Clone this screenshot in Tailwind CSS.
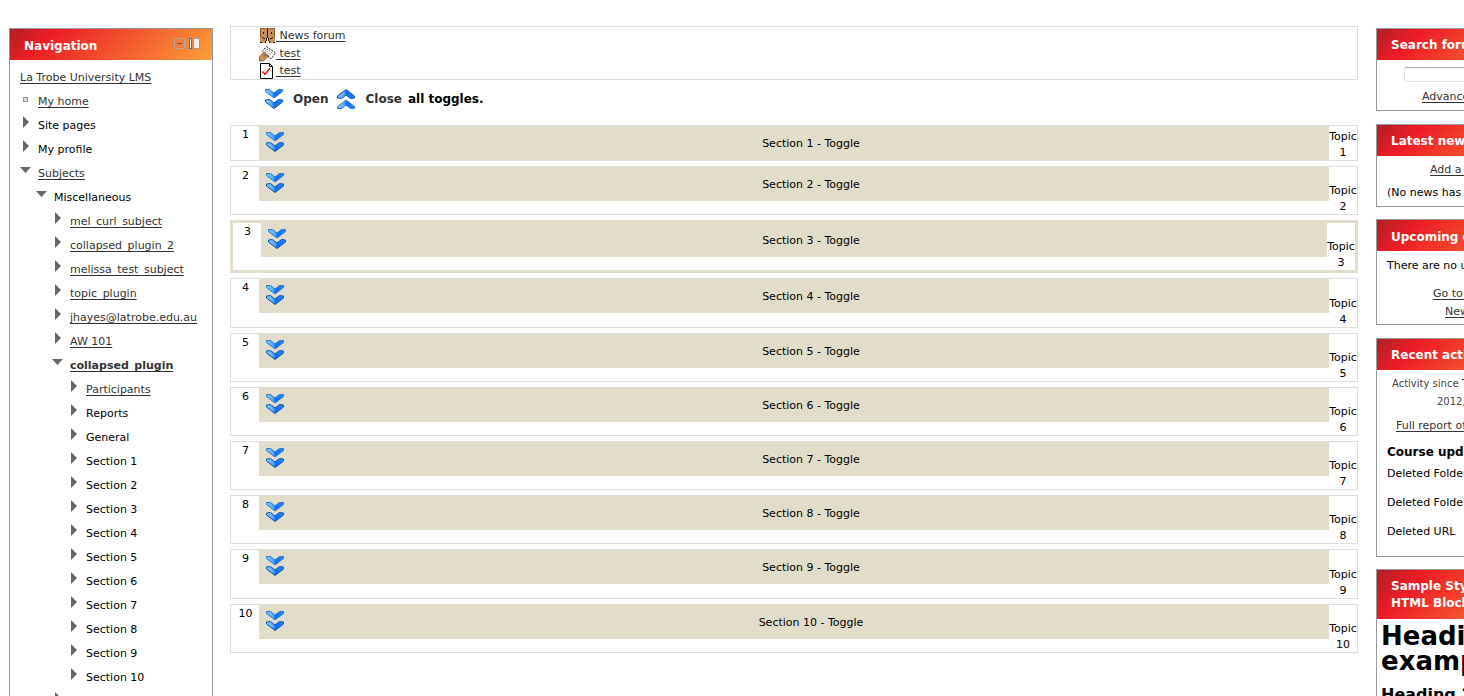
<!DOCTYPE html>
<html lang="en">
<head>
  <meta charset="UTF-8" />
  <meta name="viewport" content="width=device-width, initial-scale=1" />
  <title>Course: collapsed_plugin</title>
  <script src="https://cdn.jsdelivr.net/npm/@tailwindcss/browser@4"></script>
</head>
<body class="bg-white text-black font-['Verdana','DejaVu_Sans',sans-serif] text-[11px] leading-4 h-screen overflow-hidden">
  <!-- shared icons -->
  <svg class="absolute w-0 h-0">
    <defs>
      <linearGradient id="blue" x1="0" y1="0" x2="1" y2="0">
        <stop offset="0" stop-color="#7cc4ff" />
        <stop offset="0.35" stop-color="#5fb0fc" />
        <stop offset="0.55" stop-color="#0a6cf5" />
        <stop offset="1" stop-color="#2b8cff" />
      </linearGradient>
    </defs>
    <symbol id="down" viewBox="0 0 20 22">
      <path d="M1.500 1.500h4l4.500 3.500 4.500-3.500h4v2L10 10 1.500 3.500z" fill="url(#blue)" stroke="#2a78d0" stroke-linejoin="round" />
      <path d="M1.500 12l4-.500 4.500 3.500 4.500-3.500 4 .500v2L10 20.500 1.500 14z" fill="url(#blue)" stroke="#0f4fb4" stroke-linejoin="round" />
    </symbol>
    <symbol id="up" viewBox="0 0 20 22">
      <path d="M1.500 10l4 .500 4.500-3.500 4.500 3.500 4-.500V8L10 1.500 1.500 8z" fill="url(#blue)" stroke="#0f4fb4" stroke-linejoin="round" />
      <path d="M1.500 20.500h4l4.500-3.500 4.500 3.500h4v-2L10 12l-8.500 6.500z" fill="url(#blue)" stroke="#2a78d0" stroke-linejoin="round" />
    </symbol>
  </svg>

  <div class="flex items-start w-[calc(100%+125px)] px-[9px] pt-[26px]">
    <!-- Navigation -->
    <aside class="w-[204px] shrink-0 mt-0.5 mr-[17px] border border-[#999]">
      <header class="flex items-center h-[31px] pl-3.5 pr-3 pt-0.5 bg-[linear-gradient(135deg,#b01f24_0%,#ee1c25_20%,#f9a13a_100%)]">
        <h2 class="flex-1 text-[12px] font-bold text-white">Navigation</h2>
        <button aria-label="Hide Navigation block" class="mb-1">
          <svg width="11" height="11" viewBox="0 0 11 11"><rect x=".5" y=".5" width="10" height="10" rx="1" fill="#f47c3a" stroke="#b5a79c" /><path d="M3 5.500h5" stroke="#6b5a50" /></svg>
        </button>
        <button aria-label="Dock Navigation block" class="ml-1 mb-1">
          <svg width="11" height="11" viewBox="0 0 11 11"><rect x=".5" y=".5" width="2" height="10" fill="#fff" stroke="#1a7fd4" /><path d="M4.500.5h6v10h-6z" fill="#eee" stroke="#999" /></svg>
        </button>
      </header>
      <ul id="tree" class="pl-2.5 pt-[5px] whitespace-nowrap"></ul>
    </aside>

    <!-- Course content -->
    <main class="flex-1 min-w-0">
      <ul class="border border-[#ddd] h-[54px] pl-7">
        <li class="h-[18px]">
          <a href="#" class="flex text-[#333]">
            <svg width="17" height="17" viewBox="0 0 17 17" shape-rendering="crispEdges">
              <path d="M1 1h7v10l-1 2v3H1zM9 1h7v15h-6v-3l-1-2z" fill="#c68e5c" />
              <path d="M1 1h5v1H2v8H1zM11 1h5v9h-1V2h-4z" fill="#8a5a30" />
              <path d="M8 1h1v10H8zM7 11h1v3H7zM9 11h1v3H9zM6 14h1v2H6zM10 14h1v2h-1zM4 5h1v2H4zM12 5h1v2h-1zM3 10h1v1H3zM4 11h2v1H4zM11 11h2v1h-2zM13 10h1v1h-1zM1 15h2v1H1zM14 15h2v1h-2z" fill="#2c1708" />
            </svg>
            <span class="pt-px underline underline-offset-2 whitespace-pre"> News forum</span>
          </a>
        </li>
        <li class="h-[17px]">
          <a href="#" class="flex text-[#333]">
            <svg width="17" height="17" viewBox="0 0 17 17">
              <path d="M7.500 1.500l9 6.500-4.500 6-9-7.500z" fill="#fff" stroke="#222" stroke-dasharray="2 1" />
              <path d="M8 4l6 4.500M6.500 5.500l6 4.500M5.500 7.500l5 4" stroke="#777" stroke-dasharray="1.500 1" />
              <path d="M.5 16v-4l2.500-3 2.500-2 1.500 1-2 3 4-1 .5 1.500-4 3-1 1.500z" fill="#c68e5c" stroke="#7a4c26" stroke-width=".7" />
            </svg>
            <span class="pt-px underline underline-offset-2 whitespace-pre"> test</span>
          </a>
        </li>
        <li class="h-[17px]">
          <a href="#" class="flex text-[#333]">
            <svg width="17" height="17" viewBox="0 0 17 17">
              <path d="M1.500 1.500h9l3 3v12h-12z" fill="#fff" stroke="#000" />
              <path d="M10.500 1.500v3h3" fill="none" stroke="#000" />
              <path d="M3.500 9.500l2.500 3 5-6.500" fill="none" stroke="#f00" stroke-width="1.400" />
            </svg>
            <span class="pt-px underline underline-offset-2 whitespace-pre"> test</span>
          </a>
        </li>
      </ul>

      <div class="flex items-center h-[37px] pl-[34px] mb-2 text-[12px] font-bold">
        <button class="flex items-center gap-[9px] text-[#333]"><svg width="20" height="22"><use href="#down" /></svg>Open</button>
        <button class="flex items-center gap-[9px] ml-2 mr-1.5 text-[#333]"><svg width="20" height="22"><use href="#up" /></svg>Close</button>
        all toggles.
      </div>

      <ul id="topics" class="flex flex-col gap-[5px]"></ul>
    </main>

    <!-- Side blocks -->
    <aside class="w-[204px] shrink-0 mt-0.5 ml-[18px] flex flex-col gap-[13px] text-left whitespace-nowrap">
      <section class="border border-[#999] h-[83px]">
        <h2 class="h-[31px] pl-3.5 pt-2 text-[12px] font-bold text-white bg-[linear-gradient(135deg,#b01f24_0%,#ee1c25_20%,#f9a13a_100%)]">Search forums</h2>
        <input type="text" aria-label="Search forums" class="block ml-[27px] mt-[7px] w-[110px] h-[15px] border border-[#e3e3ea] border-t-[#aaa] rounded-xs" />
        <a href="#" class="block pl-[45px] mt-[7px] text-[#333] underline underline-offset-2">Advanced search</a>
      </section>

      <section class="border border-[#999] h-[83px] -mb-px">
        <h2 class="h-[31px] pl-3.5 pt-2 text-[12px] font-bold text-white bg-[linear-gradient(135deg,#b01f24_0%,#ee1c25_20%,#f9a13a_100%)]">Latest news</h2>
        <a href="#" class="block pl-[53px] mt-1.5 text-[#333] underline underline-offset-2">Add a new topic...</a>
        <p class="pl-2.5 mt-[7px] overflow-hidden">(No news has been posted yet)</p>
      </section>

      <section class="border border-[#999] h-[106px]">
        <h2 class="h-[31px] pl-3.5 pt-[9px] text-[12px] font-bold text-white bg-[linear-gradient(135deg,#b01f24_0%,#ee1c25_20%,#f9a13a_100%)]">Upcoming events</h2>
        <p class="pl-2.5 mt-[7px] overflow-hidden">There are no upcoming events</p>
        <a href="#" class="block pl-14 mt-3 text-[#333] underline underline-offset-2">Go to calendar...</a>
        <a href="#" class="block pl-[68px] mt-0.5 text-[#333] underline underline-offset-2">New event...</a>
      </section>

      <section class="border border-[#999] h-[219px] -mb-px overflow-hidden">
        <h2 class="h-[31px] pl-3.5 pt-2 text-[12px] font-bold text-white bg-[linear-gradient(135deg,#b01f24_0%,#ee1c25_20%,#f9a13a_100%)]">Recent activity</h2>
        <p class="pl-[15px] pt-[5px] text-[10px] leading-[18px] text-[#444]">Activity since Thursday, 5 July</p>
        <p class="pl-[60px] text-[10px] leading-[18px] text-[#444]">2012, 10:22 AM</p>
        <a href="#" class="block pl-[19px] mt-[7px] text-[#333] underline underline-offset-2">Full report of recent activity...</a>
        <h3 class="pl-2.5 mt-2.5 text-[12px] font-bold">Course updates:</h3>
        <p class="pl-2.5 mt-1.5">Deleted Folder</p>
        <p class="pl-2.5 mt-[13px]">Deleted Folder</p>
        <p class="pl-2.5 mt-[13px]">Deleted URL</p>
      </section>

      <section class="border border-[#999]">
        <h2 class="h-[49px] pl-3.5 pt-2 text-[12px] leading-[17px] font-bold text-white bg-[linear-gradient(135deg,#b01f24_0%,#ee1c25_20%,#f9a13a_100%)]">Sample Styled<br />HTML Block</h2>
        <h1 class="pl-1 pt-[5px] text-[26px] leading-[25px] font-bold">Heading 1<br />example</h1>
        <h2 class="pl-1 pt-3 text-[16px] leading-[18px] font-bold">Heading 2 example</h2>
      </section>
    </aside>
  </div>

  <script>
    const indents = ['', 'pl-4', 'pl-8', 'pl-12'];

    // level, marker, label, is link, is bold
    const nodes = [
      [0, 'item', 'My home', true],
      [0, 'closed', 'Site pages'],
      [0, 'closed', 'My profile'],
      [0, 'open', 'Subjects', true],
      [1, 'open', 'Miscellaneous'],
      [2, 'closed', 'mel_curl_subject', true],
      [2, 'closed', 'collapsed_plugin_2', true],
      [2, 'closed', 'melissa_test_subject', true],
      [2, 'closed', 'topic_plugin', true],
      [2, 'closed', 'jhayes@latrobe.edu.au', true],
      [2, 'closed', 'AW 101', true],
      [2, 'open', 'collapsed_plugin', true, true],
      [3, 'closed', 'Participants', true],
      [3, 'closed', 'Reports'],
      [3, 'closed', 'General'],
    ];
    for (let i = 1; i <= 10; i++) nodes.push([3, 'closed', 'Section ' + i]);
    nodes.push([2, 'closed', '']);

    const markers = {
      item: '<rect x="3.500" y="8.500" width="4" height="4" fill="#ddd" stroke="#999"/>',
      closed: '<path d="M3 3l6 6-6 6z" fill="#666"/>',
      open: '<path d="M0 6h11l-5.500 6z" fill="#666"/>',
    };

    const tree = document.getElementById('tree');
    tree.innerHTML = '<li class="h-6 leading-[26px]"><a href="#" class="text-[#333] underline underline-offset-2">La Trobe University LMS</a></li>';
    nodes.forEach(([level, marker, label, link, bold]) => {
      const text = link
        ? `<a href="#" class="text-[#333] underline underline-offset-2 ${bold ? 'font-bold' : ''}">${label}</a>`
        : `<span>${label}</span>`;
      tree.innerHTML += `
        <li class="flex h-6 leading-[26px] ${indents[level]}">
          <svg class="shrink-0" width="18" height="18" viewBox="0 0 18 18">${markers[marker]}</svg>${text}
        </li>`;
    });

    const topics = document.getElementById('topics');
    for (let i = 1; i <= 10; i++) {
      let box = 'h-[49px] border border-[#ddd]';
      if (i === 1) box = 'h-9 border border-[#ddd]';
      if (i === 3) box = 'h-[53px] border-3 border-[#e2dcca]'; // current section
      if (i === 4 || i === 9) box = 'h-[50px] border border-[#ddd]';
      topics.innerHTML += `
        <li class="flex ${box}">
          <div class="w-7 shrink-0 pt-px pl-px text-center">${i}</div>
          <button class="flex-1 flex items-center h-[34px] pl-1.5 bg-[#e2dcca]">
            <svg class="mb-0.5" width="20" height="22"><use href="#down"/></svg>
            <span class="flex-1 pt-0.5 pl-2">Section ${i} - Toggle</span>
          </button>
          <div class="w-7 shrink-0 flex flex-col justify-end items-center -mb-px"><span>Topic</span><span>${i}</span></div>
        </li>`;
    }
  </script>
</body>
</html>
